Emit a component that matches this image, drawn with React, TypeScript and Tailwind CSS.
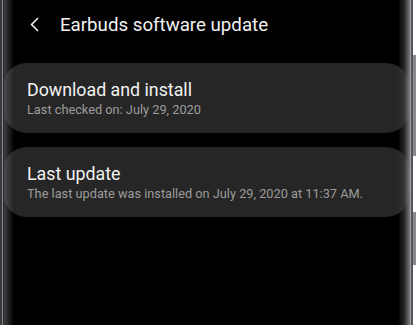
import React from "react";

function Card({ title, sub }: { title: string; sub: string }) {
  return (
    <div className="h-[70px] rounded-[24px] bg-[#262626] pl-[24px] pt-[16px] flex flex-col">
      <div className="text-[17.8px] leading-[22px] text-[#f2f2f2]">{title}</div>
      <div className="text-[12.75px] leading-[17px] text-[#9c9c9c]">{sub}</div>
    </div>
  );
}

export default function App() {
  return (
    <div
      className="relative w-[420px] h-[325px] overflow-hidden bg-black flex"
      style={{ fontFamily: "Roboto, 'Noto Sans', sans-serif" }}
    >
      <div className="flex-1 flex flex-col pl-[3px] pr-[10px]">
        <div className="h-[63px] flex items-start pt-[13px]">
          <svg width="10" height="16" viewBox="0 0 10 16" className="ml-[27px] mt-[4px]">
            <path d="M8 1 L1.6 7.5 L8 14" fill="none" stroke="#f2f2f2" strokeWidth="1.6" />
          </svg>
          <div className="ml-[20px] text-[18.7px] leading-[24px] text-[#f2f2f2]">Earbuds software update</div>
        </div>
        <div className="flex flex-col gap-[14px]">
          <Card title="Download and install" sub="Last checked on: July 29, 2020" />
          <Card title="Last update" sub="The last update was installed on July 29, 2020 at 11:37 AM." />
        </div>
      </div>
      {/* left bezel */}
      <div className="absolute left-0 top-0 h-full w-[14px] pointer-events-none flex">
        <div className="w-[2px] h-full bg-[#3a3a3e]" />
        <div className="w-[1px] h-full bg-[#8a8a90]" />
        <div className="w-[1px] h-full bg-[#2a2a2e]" />
        <div className="flex-1 h-full bg-gradient-to-r from-[#5a5a5e]/70 to-transparent" />
      </div>
      {/* right bezel */}
      <div className="absolute right-0 top-0 h-full w-[22px] pointer-events-none flex">
        <div className="w-[12px] h-full bg-gradient-to-r from-transparent via-[#3c3c40]/60 to-[#8a8a90]/90" />
        <div className="w-[1px] h-full bg-[#9a9aa0]" />
        <div className="w-[2px] h-full bg-[#55555a]" />
        <div className="flex-1 h-full bg-white relative">
          <div className="absolute left-0 top-[55px] h-[101px] w-[3px] bg-[#8a8a90]" />
          <div className="absolute left-0 top-[212px] h-[53px] w-[3px] bg-[#8a8a90]" />
        </div>
      </div>
    </div>
  );
}
